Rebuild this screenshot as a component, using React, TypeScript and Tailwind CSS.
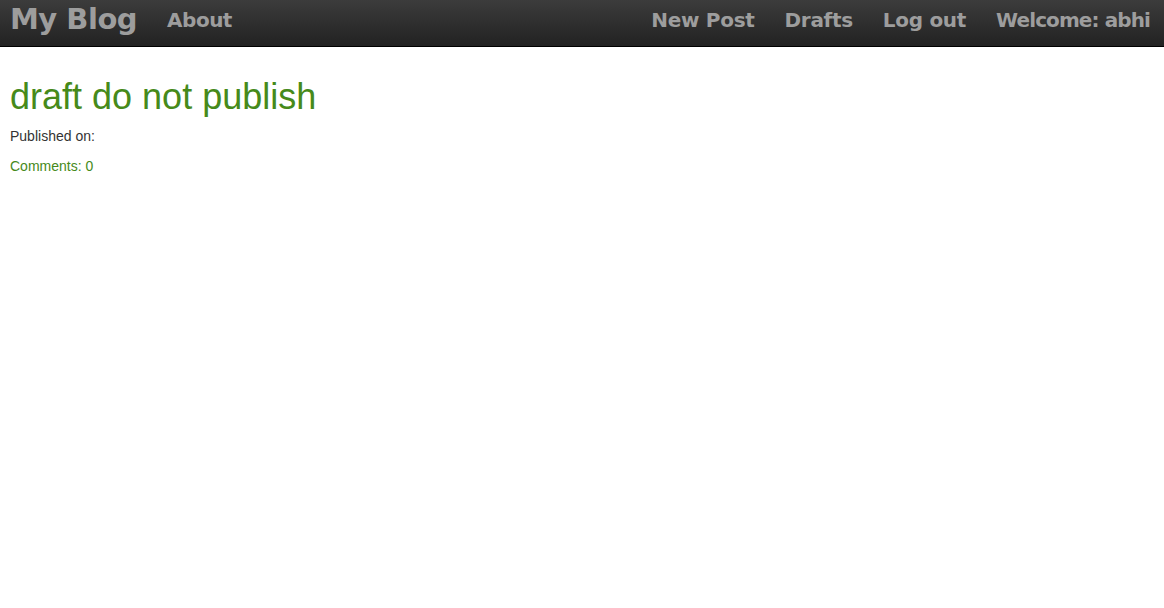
import React from 'react';

const navFont = { fontFamily: '"DejaVu Sans", "Liberation Sans", sans-serif' };

export default function App() {
  return (
    <div className="min-h-screen bg-white" style={{ fontFamily: '"Liberation Sans", Arial, sans-serif' }}>
      <nav
        className="flex h-[47px] items-center justify-between border-b border-black bg-gradient-to-b from-[#3c3c3c] to-[#222222] pb-[6px] pl-[10px] pr-[14px]"
        style={navFont}
      >
        <div className="flex items-center gap-[30px]">
          <a className="text-[29px] font-bold tracking-[-0.5px] text-[#9d9d9d]">My Blog</a>
          <a className="text-[20px] font-bold tracking-[-0.5px] text-[#9d9d9d]">About</a>
        </div>
        <div className="flex items-center gap-[30px] text-[20px] font-bold tracking-[-0.3px] text-[#9d9d9d]">
          <a>New Post</a>
          <a>Drafts</a>
          <a>Log out</a>
          <span className="tracking-[-0.9px]">Welcome: abhi</span>
        </div>
      </nav>

      <main className="px-[10px] pt-[30px]">
        <h1 className="text-[36px] leading-[40px] text-[#468a1a]">draft do not publish</h1>
        <p className="mt-[9px] text-[14px] text-[#333333]">Published on:</p>
        <p className="mt-[9px] text-[14px] text-[#468a1a]">Comments: 0</p>
      </main>
    </div>
  );
}
